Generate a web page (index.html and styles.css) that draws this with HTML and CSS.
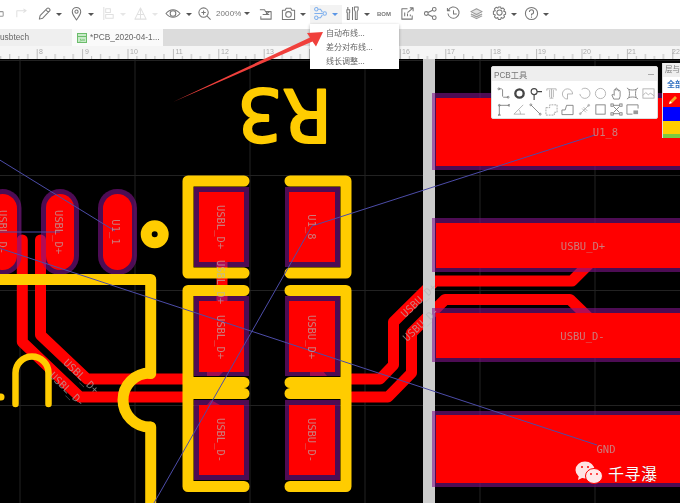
FILE: index.html
```html
<!DOCTYPE html>
<html lang="zh">
<head>
<meta charset="utf-8">
<title>PCB</title>
<link rel="stylesheet" href="styles.css">
</head>
<body>
<div class="page">
  <header class="toolbar">
    <div class="tool"><svg class="ic pale-dark" viewBox="0 0 16 16"><rect x="3" y="6" width="10" height="5" rx="1"/></svg></div>
    <div class="tool"><svg class="ic pale" viewBox="0 0 16 16"><path d="M3 12V5h9M10 3l3 2-3 2"/></svg></div>
    <div class="tool caret"><svg class="ic" viewBox="0 0 16 16"><path d="M2.500 14l.8-3.700L10.800 2.600a1.400 1.400 0 0 1 2 0l.7.7a1.400 1.400 0 0 1 0 2l-7.400 7.700zM9.500 4l2.600 2.700"/></svg><i class="tri"></i></div>
    <div class="tool caret"><svg class="ic" viewBox="0 0 16 16"><path d="M8 15C5.500 11 3.500 8.800 3.500 6a4.500 4.500 0 0 1 9 0C12.500 8.800 10.500 11 8 15z"/><circle cx="8" cy="6" r="1.700"/></svg><i class="tri"></i></div>
    <div class="tool caret"><svg class="ic pale" viewBox="0 0 16 16"><path d="M3 1v14M5 3h5v4H5zM5 9h8v4H5z"/></svg><i class="tri off"></i></div>
    <div class="tool caret"><svg class="ic pale" viewBox="0 0 16 16"><path d="M8 2L2 14h12zM8 2v12M5 9h6"/></svg><i class="tri off"></i></div>
    <div class="tool caret"><svg class="ic wide" viewBox="0 0 18 16"><path d="M1.500 8c2.500-3 5-4 7.500-4s5 1 7.500 4c-2.500 3-5 4-7.500 4S4 11 1.500 8z"/><circle cx="9" cy="8" r="3"/></svg><i class="tri"></i></div>
    <div class="tool zoomer"><svg class="ic" viewBox="0 0 16 16"><circle cx="7" cy="7" r="5"/><path d="M4.700 7h4.600M7 4.700v4.600M10.800 10.800l3.700 3.700"/></svg><span class="zoomval">2000%</span><i class="tri"></i></div>
    <div class="tool"><svg class="ic" viewBox="0 0 16 16"><path d="M2 4h5l1 2h6v8H3v-3M5 9h4M9 9l3-3M9 6v3h3"/></svg></div>
    <div class="tool caret"><svg class="ic" viewBox="0 0 16 16"><path d="M1.500 4.500h3l1-2h5l1 2h3v10h-13z"/><circle cx="8" cy="9" r="3"/></svg><i class="tri"></i></div>
    <div class="tool caret active"><svg class="ic blue" viewBox="0 0 16 16"><circle cx="3.500" cy="3.500" r="1.800"/><circle cx="3.500" cy="12.500" r="1.800"/><circle cx="12.500" cy="8" r="1.800"/><path d="M5.300 3.500h2.700l2 3M5.300 12.500h2.700l2-3M1.500 8h9"/></svg><i class="tri on"></i></div>
    <div class="tool caret"><svg class="ic" viewBox="0 0 16 16"><path d="M3 1v3M2 4h3v3H4.500v7.500h-2V7H2zM11 1h3v3l-1 2v8.500h-2V6l-1-2V1zM8 1v14"/></svg><i class="tri"></i></div>
    <div class="tool"><span class="bom">BOM</span></div>
    <div class="tool"><svg class="ic" viewBox="0 0 16 16"><path d="M8 3H2v11h11v-4M5 11V7M8 11V8M11 11V9M8 7l6-5M10.500 2H14v3.500"/></svg></div>
    <div class="tool"><svg class="ic" viewBox="0 0 16 16"><circle cx="3.500" cy="8" r="2"/><circle cx="12" cy="3.500" r="2"/><circle cx="12" cy="12.500" r="2"/><path d="M5.300 7l5-2.500M5.300 9l5 2.500"/></svg></div>
    <div class="tool"><svg class="ic" viewBox="0 0 16 16"><path d="M2.500 4.500A6 6 0 1 1 2 8M1.500 2v3h3M8 4.500v4h3.500"/></svg></div>
    <div class="tool"><svg class="ic layers" viewBox="0 0 16 16"><path d="M8 3l6 3-6 3-6-3zM2 8.500L8 11.500l6-3M2 10.500L8 13.500l6-3"/></svg></div>
    <div class="tool caret"><svg class="ic" viewBox="0 0 16 16"><path d="M6.800 1h2.400l.6 2 1.800-.9 1.800 1.700-.9 1.900 2 .7v2.500l-2 .7.900 1.900-1.800 1.700-1.800-.9-.6 2H6.800l-.6-2-1.800.9-1.800-1.700.9-1.900-2-.7V5.700l2-.7-.9-1.900 1.800-1.700 1.800.9z"/><circle cx="8" cy="7" r="2.800"/></svg><i class="tri"></i></div>
    <div class="tool caret"><svg class="ic" viewBox="0 0 16 16"><circle cx="8" cy="8" r="6.500"/><path d="M5.800 6.300A2.200 2.200 0 1 1 8 8.500v1.500M8 11.300v1.200"/></svg><i class="tri"></i></div>
  </header>

  <nav class="tabs">
    <div class="tab first">usbtech</div>
    <div class="tab current">
      <svg class="tabicon" viewBox="0 0 10 10"><rect x=".5" y=".5" width="9" height="9"/><path d="M.5 3.500h9M3 6l1.500 1L3 8.500M5 7h3"/></svg>
      <span>*PCB_2020-04-1...</span>
    </div>
  </nav>

  <svg class="ruler" viewBox="0 46 680 13">
    <defs>
      <pattern id="ticks" patternUnits="userSpaceOnUse" x="36.700" y="46" width="45.400" height="13">
        <path class="tick" d="M.5 3V13M9.500 10V13M18.500 8V13M27.500 10V13M36.500 8V13"/>
      </pattern>
    </defs>
    <rect x="0" y="46" width="680" height="13" fill="url(#ticks)"/>
    <g class="rulernum">
      <text x="39" y="54">8</text><text x="85" y="54">9</text><text x="130" y="54">10</text><text x="175.500" y="54">11</text><text x="221" y="54">12</text><text x="266" y="54">13</text><text x="402" y="54">16</text><text x="447" y="54">17</text><text x="493" y="54">18</text><text x="538" y="54">19</text><text x="583" y="54">20</text><text x="628" y="54">21</text><text x="672" y="54">22</text>
    </g>
  </svg>

  <main class="workspace">
    <svg class="board" viewBox="0 59 680 444">
      <g class="grid">
        <path d="M20 59V503M135 59V503M250 59V503M365 59V503M480 59V503M595 59V503M0 60.500H680M0 175.500H680M0 290.500H680M0 405.500H680"/>
      </g>
      <g class="trace">
        <path d="M22.300 240V342L80 397H183"/>
        <path d="M40.500 240V335L87 379H183"/>
        <path d="M352 379H380L393.500 365V322L435 281H572L592 261"/>
        <path d="M352 397H388L411.500 373V333L445 299.500H570L588 317"/>
        <path d="M222 262V300"/>
      </g>
      <g class="stub">
        <polygon points="207,376 219,376 225,370 207,370"/>
        <polygon points="211,400 220,405 207,405"/>
        <polygon points="310,376 327,376 322,370 310,370"/>
      </g>
      <rect class="divider" x="423" y="59" width="12" height="444"/>

      <g class="mask">
        <rect x="-16.500" y="189" width="38" height="86" rx="19"/>
        <rect x="41" y="189" width="38" height="86" rx="19"/>
        <rect x="98" y="189" width="39" height="86" rx="19"/>
        <rect x="194" y="187" width="55" height="80"/>
        <rect x="285" y="187" width="55" height="80"/>
        <rect x="194" y="296" width="55" height="80"/>
        <rect x="285" y="296" width="55" height="80"/>
        <rect x="194" y="400" width="55" height="80"/>
        <rect x="285" y="400" width="55" height="80"/>
        <rect x="432" y="93" width="260" height="77"/>
        <rect x="432" y="218" width="260" height="54"/>
        <rect x="432" y="308" width="260" height="54"/>
        <rect x="432" y="411" width="260" height="76"/>
      </g>
      <g class="copper">
        <rect x="-12" y="194" width="29" height="76" rx="14.500"/>
        <rect x="46" y="194" width="28" height="76" rx="14"/>
        <rect x="103" y="194" width="29" height="76" rx="14.500"/>
        <rect x="199" y="192" width="45" height="70"/>
        <rect x="289" y="192" width="46" height="70"/>
        <rect x="199" y="301" width="45" height="71"/>
        <rect x="289" y="301" width="46" height="71"/>
        <rect x="199" y="405" width="45" height="70"/>
        <rect x="289" y="405" width="46" height="70"/>
        <rect x="436" y="98" width="250" height="68"/>
        <rect x="436" y="223" width="250" height="45"/>
        <rect x="436" y="313" width="250" height="45"/>
        <rect x="436" y="415" width="250" height="68"/>
      </g>

      <g class="silk">
        <path d="M-5 279.500H150.700V373.500"/>
        <path d="M150 373A27 27 0 0 0 150 427"/>
        <path d="M150.700 427V510"/>
        <path d="M244 181H188V273H244"/>
        <path d="M290 181H346V273H290"/>
        <path d="M244 290.500H188V486.500H244M188 382.500H244M188 393.500H244"/>
        <path d="M290 290.500H346V486.500H290M346 382.500H290M346 393.500H290"/>
      </g>
      <path class="silk thin" d="M15.500 404V373A16.500 16.500 0 0 1 48.500 373V404"/>
      <circle class="silkdot" cx="1" cy="397" r="3.500"/>
      <circle class="silkring" cx="154.700" cy="234.300" r="8.500"/>
      <text class="refdes" transform="translate(332 89) rotate(180)" textLength="95" lengthAdjust="spacingAndGlyphs">R3</text>

      <g class="rat">
        <path d="M-10 154L115 231M0 232H60M0 248.400L597 445M312 226L595 135M312 226L150 510"/>
      </g>

      <g class="net">
        <text transform="translate(3 232) rotate(90)">USBL_D-</text>
        <text transform="translate(59 232) rotate(90)">USBL_D+</text>
        <text transform="translate(116 232) rotate(90)">U1_1</text>
        <text transform="translate(221 227) rotate(90)">USBL_D+</text>
        <text transform="translate(221 282) rotate(90)">USBL_D+</text>
        <text transform="translate(221 337) rotate(90)">USBL_D+</text>
        <text transform="translate(221 440) rotate(90)">USBL_D-</text>
        <text transform="translate(312 227) rotate(90)">U1_8</text>
        <text transform="translate(312 337) rotate(90)">USBU_D+</text>
        <text transform="translate(312 440) rotate(90)">USBU_D-</text>
        <text transform="translate(81.500 376) rotate(44)">USBL_D+</text>
        <text transform="translate(67.500 389) rotate(44)">USBL_D-</text>
        <text transform="translate(418.500 300) rotate(-43)">USBU_D+</text>
        <text transform="translate(420.500 324) rotate(-43)">USBU_D-</text>
        <text x="605.500" y="132">U1_8</text>
        <text x="583" y="246">USBU_D+</text>
        <text x="582.500" y="336">USBU_D-</text>
        <text x="606" y="449">GND</text>
      </g>
    </svg>

    <section class="pcbtools">
      <div class="pcbtools-head"><span>PCB工具</span><i class="minimize"></i></div>
      <div class="pcbtools-grid">
        <svg class="pt" viewBox="0 0 14 14"><path d="M2 2h3l1 1v7l1 1h5"/><circle cx="2" cy="2" r="1"/><circle cx="12" cy="11" r="1"/></svg>
        <svg class="pt strong" viewBox="0 0 14 14"><circle cx="7" cy="7" r="4.500"/></svg>
        <svg class="pt dark" viewBox="0 0 14 14"><circle cx="5.500" cy="5" r="3.200"/><path d="M8.700 5H14M5.500 8.200V14"/></svg>
        <svg class="pt soft" viewBox="0 0 14 14"><path d="M2 4V2h10v2M7 2v10M5 12h4M5 3v8M9 3v8"/></svg>
        <svg class="pt soft" viewBox="0 0 14 14"><path d="M7 13A5.500 5.500 0 1 1 12.500 7.500H7z"/></svg>
        <svg class="pt soft" viewBox="0 0 14 14"><path d="M4 2.500A5.500 5.500 0 1 1 2 7.500"/></svg>
        <svg class="pt soft" viewBox="0 0 14 14"><circle cx="7" cy="7" r="5.500"/></svg>
        <svg class="pt" viewBox="0 0 14 14"><path d="M4 13L2 8.500l1.500-.5L4.500 9V3.500a.8.800 0 0 1 1.600 0V2a.8.800 0 0 1 1.600 0v1.500a.8.800 0 0 1 1.600 0v1a.8.800 0 0 1 1.600 0V10l-1 3z"/></svg>
        <svg class="pt" viewBox="0 0 14 14"><path d="M3 2.500C5 3.500 9 3.500 11 2.500C10 5 10 9 11 11.500C9 10.500 5 10.500 3 11.500C4 9 4 5 3 2.500zM1 1l2 1.500M13 1l-2 1.500M1 13l2-1.500M13 13l-2-1.500"/></svg>
        <svg class="pt soft" viewBox="0 0 14 14"><rect x="1" y="2" width="12" height="10"/><path d="M1 9l3-3 3 2.500 2-2 4 3"/></svg>

        <svg class="pt" viewBox="0 0 14 14"><path d="M2.500 13V2.500H13"/><circle cx="2.500" cy="2.500" r="1"/><circle cx="13" cy="2.500" r="1"/><circle cx="2.500" cy="13" r="1"/></svg>
        <svg class="pt soft" viewBox="0 0 14 14"><path d="M11 2L1 12h12M6 7c1.500 1.200 2 3 2 5"/></svg>
        <svg class="pt" viewBox="0 0 14 14"><path d="M2.500 2.500l9 9"/><circle cx="2" cy="2" r="1"/><circle cx="12" cy="12" r="1"/></svg>
        <svg class="pt dash" viewBox="0 0 14 14"><path d="M1 5h4V2h8v8h-3v3H1z"/></svg>
        <svg class="pt" viewBox="0 0 14 14"><path d="M1 12.500h12v-10H6l-1.500 5H1z"/></svg>
        <svg class="pt soft" viewBox="0 0 14 14"><path d="M2 12l10-10M4.500 6l4 4M6 4.500l4 4"/><circle cx="2.500" cy="11.500" r="1"/><circle cx="11.500" cy="2.500" r="1"/></svg>
        <svg class="pt" viewBox="0 0 14 14"><rect x="2" y="2" width="10" height="10"/></svg>
        <svg class="pt" viewBox="0 0 14 14"><rect x="1" y="1" width="2.500" height="2.500"/><rect x="10.500" y="1" width="2.500" height="2.500"/><rect x="1" y="10.500" width="2.500" height="2.500"/><rect x="10.500" y="10.500" width="2.500" height="2.500"/><path d="M3.500 2.500h7M3 11.500h7.500M4 4l6 6M10 4l-6 6"/></svg>
        <svg class="pt" viewBox="0 0 14 14"><path d="M13 6V2H1v10h6"/><rect x="8" y="8" width="5" height="4" class="ptfill"/></svg>
      </div>
    </section>

    <section class="layers-panel">
      <div class="layers-head">层与元件</div>
      <div class="layers-all">全部</div>
      <div class="layer l-red"><svg class="pencil" viewBox="0 0 10 10"><path class="pen-body" d="M1 9l1-3 5-5 2 2-5 5z"/><path class="pen-tip" d="M1 9l1-3 2 2z"/></svg></div>
      <div class="layer l-blue"></div>
      <div class="layer l-yellow"></div>
      <div class="layer l-green"></div>
    </section>

    <div class="watermark">
      <svg class="wx" viewBox="0 0 28 23"><ellipse class="bub" cx="10" cy="9" rx="9.500" ry="8.500"/><path class="bub" d="M4 14l-1 5 6-3z"/><ellipse class="bub2" cx="19" cy="15" rx="8.500" ry="7.500"/><circle class="eye" cx="7" cy="6" r="1"/><circle class="eye" cx="13" cy="6" r="1"/><circle class="eye" cx="16" cy="13" r=".900"/><circle class="eye" cx="22" cy="13" r=".900"/></svg>
      <span>千寻瀑</span>
    </div>
  </main>

  <ul class="menu">
    <li>自动布线...</li>
    <li>差分对布线...</li>
    <li>线长调整...</li>
  </ul>

  <svg class="arrow" viewBox="0 0 680 503"><polygon points="323,32 307,33 310,37.500 173,102 312.500,41.500 316,46.500"/></svg>
</div>
</body>
</html>
```

FILE: styles.css
```css
* { box-sizing: border-box; }
html, body { margin: 0; padding: 0; }
body { width: 680px; height: 503px; overflow: hidden; background: #000; font-family: "Liberation Sans", "Noto Sans CJK SC", sans-serif; }
.page { position: relative; width: 680px; height: 503px; overflow: hidden; }

.toolbar { display: flex; height: 29px; margin-left: -12px; width: 692px; background: #fff; filter: blur(.5px); align-items: stretch; }
.tool { width: 23px; height: 29px; padding-top: 6px; display: flex; justify-content: flex-start; padding-left: 3px; gap: 4px; flex: none; }
.tool.caret { width: 32px; }
.tool.zoomer { width: 61px; gap: 0; }
.tool.active { background: linear-gradient(#fff 5px, #f3f3f3 5px); }
.ic { width: 15px; height: 15px; flex: none; fill: none; stroke: #777; stroke-width: 1.100; stroke-linejoin: round; }
.ic.wide { width: 18px; margin-left: -1px; }
.ic.pale { stroke: #e0e0e0; }
.ic.pale-dark { stroke: #999; }
.ic.blue { stroke: #7fb0ee; }
.ic.layers { stroke: #999; fill: #e4e4e4; }
.tri { display: block; width: 0; height: 0; margin-top: 7px; border: 3px solid transparent; border-top: 3px solid #555; border-bottom: 0; flex: none; }
.tri.off { border-top-color: #e6e6e6; }
.tri.on { border-top-color: #5a96e6; }
.zoomval { font-size: 8px; color: #777; line-height: 16px; margin: 0 3px 0 4px; letter-spacing: .1px; }
.zoomer .tri { margin-top: 6px; }
.bom { font-size: 6px; font-weight: 700; color: #777; line-height: 16px; }

.tabs { display: flex; height: 17px; background: #dcdcdc; filter: blur(.3px); }
.tab { height: 17px; font-size: 8.300px; line-height: 17px; color: #666; display: flex; align-items: center; }
.tab.first { width: 72px; background: #efefef; }
.tab.current { width: 91px; background: #fafafa; padding-left: 5px; gap: 3px; }
.tabicon { width: 10px; height: 10px; fill: #c8eac8; stroke: #6cbd6c; stroke-width: 1; }

.ruler { display: block; width: 680px; height: 13px; background: #f5f5f5; filter: blur(.35px); }
.tick { stroke: #bbb; stroke-width: 1; fill: none; }
.rulernum text { font-size: 7px; fill: #aaa; font-family: "Liberation Sans", sans-serif; }

.workspace { position: relative; width: 680px; height: 444px; background: #000; overflow: hidden; }
.board { display: block; width: 680px; height: 444px; filter: blur(.25px); }
.grid path { stroke: #222; stroke-width: 1; fill: none; }
.trace path { stroke: #f00; stroke-width: 11; fill: none; stroke-linejoin: round; stroke-linecap: round; }
.stub polygon { fill: #c80000; }
.divider { fill: #ccc; }
.mask rect { fill: #80148c; fill-opacity: .6; }
.copper rect { fill: #f00; }
.silk path { fill: none; stroke: #fc0; stroke-width: 11; stroke-linecap: round; stroke-linejoin: round; }
.silk.thin { fill: none; stroke: #fc0; stroke-width: 6.500; stroke-linecap: round; }
.silkdot { fill: #fc0; }
.silkring { fill: #000; stroke: #fc0; stroke-width: 11; }
.refdes { font-family: "DejaVu Sans", sans-serif; font-size: 73px; fill: #fc0; stroke: #fc0; stroke-width: 2.200; stroke-linejoin: round; }
.rat path { stroke: #4c4ca8; stroke-width: 1; fill: none; }
.net text { font-family: "DejaVu Sans Mono", monospace; font-size: 10.500px; fill: #b4b4b4; fill-opacity: .68; text-anchor: middle; dominant-baseline: central; }

.pcbtools { position: absolute; left: 491px; top: 7px; width: 167px; height: 53px; background: #fff; border: 1px solid #ddd; border-radius: 2px; filter: blur(.4px); }
.pcbtools-head { display: flex; justify-content: space-between; align-items: center; height: 14px; padding: 0 3px 0 2px; background: #eee; font-size: 8.200px; color: #777; }
.minimize { width: 6px; height: 1px; background: #aaa; display: block; }
.pcbtools-grid { display: grid; grid-template-columns: repeat(10, 16.200px); grid-auto-rows: 16px; padding: 4px 0 0 3px; justify-items: center; align-items: center; }
.pt { width: 13px; height: 13px; fill: none; stroke: #777; stroke-width: .9; }
.pt.soft { stroke: #aaa; }
.pt.dark { stroke: #444; stroke-width: 1.200; }
.pt.strong { stroke: #444; stroke-width: 2.500; }
.pt.dash { stroke-dasharray: 2 1; stroke: #999; }
.ptfill { fill: #999; stroke: none; }

.layers-panel { position: absolute; left: 662px; top: 4px; width: 30px; height: 75px; background: #fff; filter: blur(.3px); border-left: 1px solid #ddd; }
.layers-head { height: 14px; background: #eee; font-size: 7.500px; line-height: 14px; color: #777; padding-left: 2px; white-space: nowrap; overflow: hidden; }
.layers-all { height: 16px; font-size: 8px; line-height: 16px; font-weight: 700; color: #2f6fc0; padding-left: 4px; }
.layer { height: 14px; padding: 2px 0 0 5px; }
.l-red { background: #f00; }
.l-blue { background: #00f; }
.l-yellow { background: #fc0; height: 13px; }
.l-green { background: #7ac943; height: 4px; }
.pencil { width: 10px; height: 10px; display: block; }
.pen-body { fill: #f5a623; }
.pen-tip { fill: #fff; }

.watermark { position: absolute; left: 575px; top: 402px; display: flex; align-items: center; gap: 5px; height: 23px; }
.wx { width: 28px; height: 23px; }
.bub { fill: #ffe3e3; }
.bub2 { fill: #ffe9e9; stroke: #f00; stroke-width: 1; }
.eye { fill: #f00; }
.watermark span { font-family: "Noto Sans CJK SC", sans-serif; font-size: 16px; color: #fff; letter-spacing: .5px; white-space: nowrap; text-shadow: 0 0 1px rgba(90,0,0,.6); }

.menu { position: absolute; left: 310px; top: 24px; width: 89px; height: 45px; margin: 0; padding: 2px 0 0 16px; list-style: none; background: #fff; box-shadow: 0 1px 3px rgba(0,0,0,.3); filter: blur(.25px); }
.menu li { font-family: "Noto Sans CJK SC", sans-serif; font-size: 8px; height: 14px; line-height: 14px; color: #666; }

.arrow { position: absolute; left: 0; top: 0; width: 680px; height: 503px; pointer-events: none; }
.arrow polygon { fill: #f0403c; }
```
